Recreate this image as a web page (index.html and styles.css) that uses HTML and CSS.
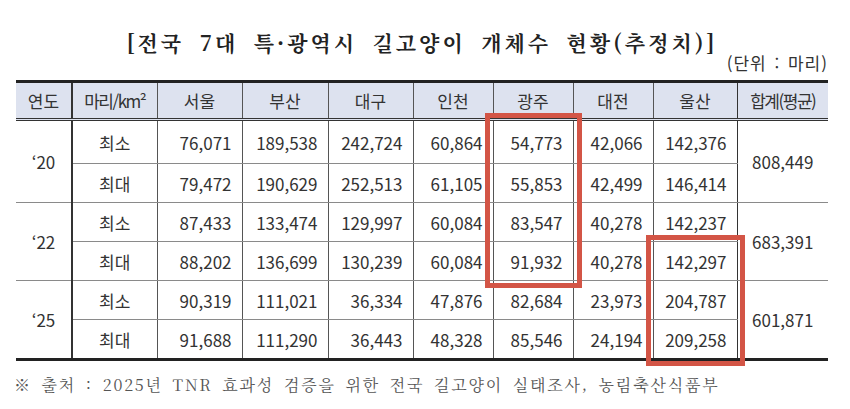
FILE: index.html
```html
<!DOCTYPE html>
<html lang="ko">
<head>
<meta charset="utf-8">
<link rel="stylesheet" href="styles.css">
</head>
<body>
<div class="page">
  <h1 class="title">[전국 7대 특·광역시 길고양이 개체수 현황(추정치)]</h1>
  <div class="unit">(단위 : 마리)</div>
  <table class="stats">
    <colgroup>
      <col class="c-year"><col class="c-kind"><col class="c-a"><col class="c-b"><col class="c-a"><col class="c-c"><col class="c-c"><col class="c-c"><col class="c-d"><col class="c-e">
    </colgroup>
    <thead>
      <tr>
        <th class="yr">연도</th>
        <th class="narrow">마리/km²</th>
        <th>서울</th><th>부산</th><th>대구</th><th>인천</th><th>광주</th><th>대전</th><th class="last">울산</th>
        <th class="sum narrow">합계(평균)</th>
      </tr>
    </thead>
    <tbody>
      <tr class="r1">
        <td class="yr" rowspan="2">‘20</td><td class="kind">최소</td>
        <td>76,071</td><td>189,538</td><td>242,724</td><td>60,864</td><td>54,773</td><td>42,066</td><td class="last">142,376</td>
        <td class="sum" rowspan="2">808,449</td>
      </tr>
      <tr class="r2 gend">
        <td class="kind">최대</td>
        <td>79,472</td><td>190,629</td><td>252,513</td><td>61,105</td><td>55,853</td><td>42,499</td><td class="last">146,414</td>
      </tr>
      <tr class="r3">
        <td class="yr" rowspan="2">‘22</td><td class="kind">최소</td>
        <td>87,433</td><td>133,474</td><td>129,997</td><td>60,084</td><td>83,547</td><td>40,278</td><td class="last">142,237</td>
        <td class="sum" rowspan="2">683,391</td>
      </tr>
      <tr class="r4 gend">
        <td class="kind">최대</td>
        <td>88,202</td><td>136,699</td><td>130,239</td><td>60,084</td><td>91,932</td><td>40,278</td><td class="last">142,297</td>
      </tr>
      <tr class="r5">
        <td class="yr" rowspan="2">‘25</td><td class="kind">최소</td>
        <td>90,319</td><td>111,021</td><td>36,334</td><td>47,876</td><td>82,684</td><td>23,973</td><td class="last">204,787</td>
        <td class="sum" rowspan="2">601,871</td>
      </tr>
      <tr class="r6">
        <td class="kind">최대</td>
        <td>91,688</td><td>111,290</td><td>36,443</td><td>48,328</td><td>85,546</td><td>24,194</td><td class="last">209,258</td>
      </tr>
    </tbody>
  </table>
  <p class="source">※ 출처 : 2025년 TNR 효과성 검증을 위한 전국 길고양이 실태조사, 농림축산식품부</p>
  <div class="mark mark-gwangju"></div>
  <div class="mark mark-ulsan"></div>
</div>
</body>
</html>
```

FILE: styles.css
```css
html, body {
  margin: 0;
  padding: 0;
  background: #ffffff;
  overflow: hidden;
}

.page {
  position: relative;
  box-sizing: border-box;
  width: 850px;
  height: 409px;
  padding: 30px 22px 0 16px;
  font-family: "Noto Sans CJK KR", "Noto Sans", sans-serif;
  color: #333;
}

.title {
  margin: 0;
  font-family: "Noto Serif CJK KR", "Liberation Serif", "Noto Sans CJK KR", serif;
  font-weight: bold;
  font-size: 21px;
  line-height: 24px;
  letter-spacing: 3px;
  word-spacing: 6px;
  text-align: center;
  color: #222;
}

.unit {
  text-align: right;
  font-size: 17px;
  line-height: 18px;
  color: #333;
  letter-spacing: 1px;
  word-spacing: 2px;
}

.stats {
  margin-top: 8px;
  width: 812px;
  table-layout: fixed;
  border-collapse: collapse;
  border-top: 3px solid #222;
  border-bottom: 3px solid #222;
}

.c-year { width: 56px; }
.c-kind { width: 85px; }
.c-a { width: 85px; }
.c-b { width: 86px; }
.c-c { width: 80px; }
.c-d { width: 84px; }
.c-e { width: 91px; }

.stats th {
  background: #dde2ef;
  font-weight: normal;
  font-size: 17px;
  height: 35px;
  padding: 0;
  text-align: center;
  border-left: 1px solid #555;
  border-bottom: 3px double #333;
  color: #333;
}

.stats th.yr { border-left: none; }
.stats th.narrow { letter-spacing: -1.5px; }

.stats td {
  font-size: 17px;
  padding: 0 10px 0 0;
  text-align: right;
  border-left: 1px solid #555;
  border-bottom: 1px solid #8a8a8a;
  color: #333;
}

.stats td.yr {
  border-left: none;
  text-align: center;
  padding: 0;
}

.stats th:nth-child(2),
.stats td.kind {
  border-left: 2px solid #333;
}

.stats td.kind {
  text-align: center;
  padding: 0;
}

.stats td.sum,
.stats th.sum {
  border-left: 1.5px solid #333;
}

.stats td.sum {
  text-align: center;
  padding: 0;
}

.r1 td { height: 42px; }
.r2 td, .r3 td, .r4 td, .r5 td, .r6 td { height: 38px; }
.r6 td { border-bottom: none; }

.source {
  margin: 14px 0 0 -2px;
  font-family: "Noto Serif CJK KR", "Liberation Serif", "Noto Sans CJK KR", serif;
  font-size: 16px;
  line-height: 20px;
  color: #555;
  letter-spacing: 1.8px;
  word-spacing: 3px;
  white-space: nowrap;
}

.mark {
  position: absolute;
  border: 5px solid #d35546;
  box-sizing: border-box;
}

.mark-gwangju {
  left: 485px;
  top: 113px;
  width: 97px;
  height: 175px;
}

.mark-ulsan {
  left: 646px;
  top: 235px;
  width: 99px;
  height: 131px;
}
```
